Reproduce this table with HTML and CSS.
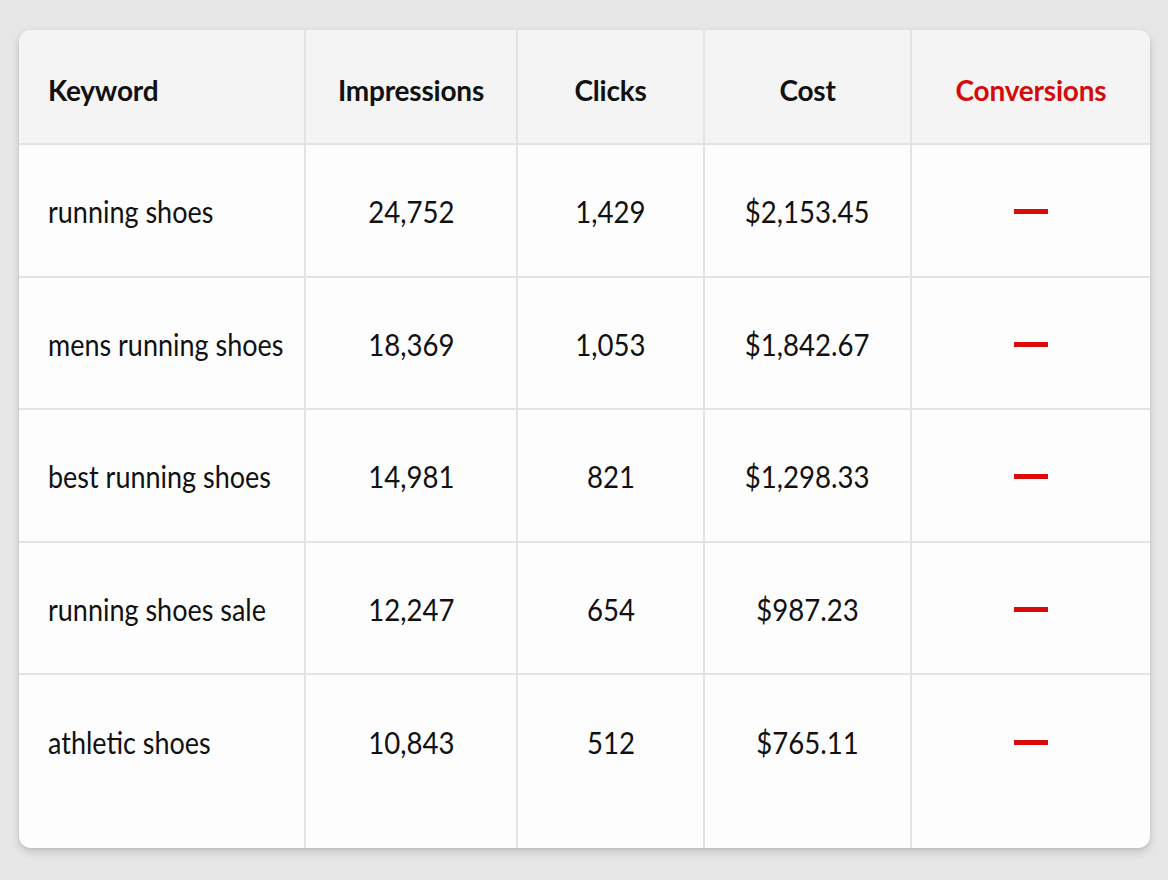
FILE: index.html
```html
<!DOCTYPE html>
<html lang="en">
<head>
<meta charset="utf-8">
<title>Keyword performance</title>
<link rel="stylesheet" href="styles.css">
</head>
<body>
<div class="card">
  <div class="grid">
    <div class="cell head left">Keyword</div>
    <div class="cell head">Impressions</div>
    <div class="cell head">Clicks</div>
    <div class="cell head">Cost</div>
    <div class="cell head red last">Conversions</div>

    <div class="cell left"><span class="txt">running shoes</span></div>
    <div class="cell"><span class="txt">24,752</span></div>
    <div class="cell"><span class="txt">1,429</span></div>
    <div class="cell"><span class="txt">$2,153.45</span></div>
    <div class="cell last"><span class="dash"></span></div>

    <div class="cell left"><span class="txt">mens running shoes</span></div>
    <div class="cell"><span class="txt">18,369</span></div>
    <div class="cell"><span class="txt">1,053</span></div>
    <div class="cell"><span class="txt">$1,842.67</span></div>
    <div class="cell last"><span class="dash"></span></div>

    <div class="cell left"><span class="txt">best running shoes</span></div>
    <div class="cell"><span class="txt">14,981</span></div>
    <div class="cell"><span class="txt">821</span></div>
    <div class="cell"><span class="txt">$1,298.33</span></div>
    <div class="cell last"><span class="dash"></span></div>

    <div class="cell left"><span class="txt">running shoes sale</span></div>
    <div class="cell"><span class="txt">12,247</span></div>
    <div class="cell"><span class="txt">654</span></div>
    <div class="cell"><span class="txt">$987.23</span></div>
    <div class="cell last"><span class="dash"></span></div>

    <div class="cell left final"><span class="txt">athletic shoes</span></div>
    <div class="cell final"><span class="txt">10,843</span></div>
    <div class="cell final"><span class="txt">512</span></div>
    <div class="cell final"><span class="txt">$765.11</span></div>
    <div class="cell last final"><span class="dash"></span></div>
  </div>
</div>
</body>
</html>
```

FILE: styles.css
```css
* { box-sizing: border-box; }

html, body {
  margin: 0;
  padding: 0;
}

body {
  width: 1168px;
  height: 880px;
  background: #e7e7e7;
  font-family: Lato, "Noto Sans", sans-serif;
  color: #111;
  padding: 30px 18px 0 19px;
}

.card {
  width: 1131px;
  height: 818px;
  background: #fdfdfd;
  border-radius: 12px;
  overflow: hidden;
  box-shadow: 0 4px 10px rgba(0, 0, 0, 0.16), 0 1px 3px rgba(0, 0, 0, 0.08);
}

.grid {
  display: grid;
  height: 100%;
  grid-template-columns: 287px 212px 187px 207px 1fr;
  grid-template-rows: 115px 132.5px 132.5px 132.5px 132.5px 1fr;
}

.cell {
  display: flex;
  align-items: center;
  justify-content: center;
  font-size: 28px;
  border-right: 2px solid #e3e3e3;
  border-bottom: 2px solid #e3e3e3;
  letter-spacing: -0.2px;
}

.cell.left {
  justify-content: flex-start;
  padding-left: 29px;
}

.cell.last { border-right: none; }

.cell.final {
  border-bottom: none;
  padding-bottom: 42px;
}

.txt {
  display: inline-block;
  font-size: 31px;
  letter-spacing: 0;
  white-space: nowrap;
  transform: scaleX(0.89);
  transform-origin: center center;
  padding-top: 2px;
}

.left .txt {
  transform: scaleX(0.87);
  transform-origin: left center;
}

.head {
  background: #f4f4f4;
  font-weight: 700;
  padding-top: 6px;
}

.red { color: #d40b0b; }

.dash {
  display: block;
  width: 34px;
  height: 5px;
  margin-top: 3px;
  background: #dc0a0a;
}
```
